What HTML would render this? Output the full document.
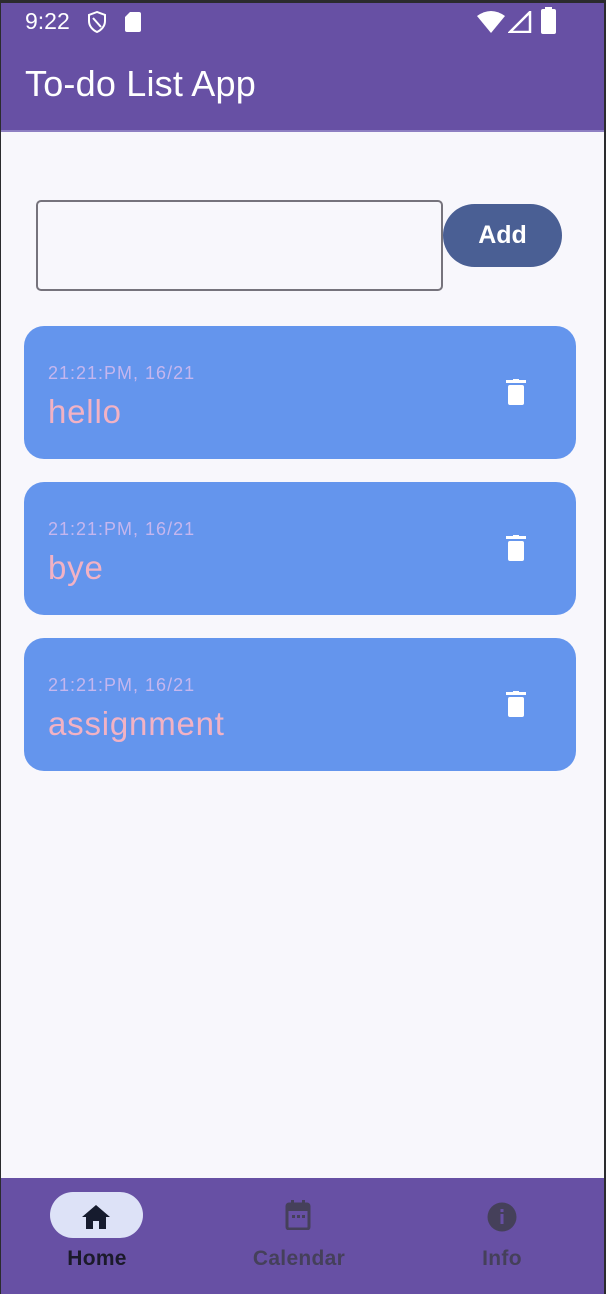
<!DOCTYPE html>
<html><head><style>
*{margin:0;padding:0;box-sizing:border-box}
body{width:606px;height:1294px;background:#2b2b2e;font-family:"Liberation Sans",sans-serif;position:relative;overflow:hidden}
.screen{position:absolute;left:1px;top:3px;width:603px;height:1291px;background:#f8f7fc}
.top{position:absolute;left:0;top:0;width:603px;height:127px;background:#6750a4}
.abs{position:absolute}
.card{position:absolute;left:23px;width:552px;height:133px;background:#6495ed;border-radius:20px}
.card .d{position:absolute;left:24px;top:37px;font-size:18px;color:#c5b6ee;letter-spacing:1px}
.card .t{position:absolute;left:24px;top:67px;font-size:33px;color:#f2b2c4;letter-spacing:.8px}
.card svg{position:absolute;left:482px;top:53px}
.nav{position:absolute;left:0;top:1175px;width:603px;height:116px;background:#6750a4}
.lbl{position:absolute;top:69px;font-size:21px;font-weight:bold;color:#45405a;transform:translateX(-50%);letter-spacing:.3px}
</style></head><body>
<div class="screen">
<div class="top">
<div class="abs" style="left:24px;top:5px;font-size:23px;color:#fff">9:22</div>
<svg class="abs" style="left:86px;top:8px" width="20" height="22" viewBox="0 0 20 22"><path d="M10 1L2 4v6c0 5 3.5 9 8 11 4.5-2 8-6 8-11V4z" fill="none" stroke="#fff" stroke-width="2"/><path d="M6 7l8 9" stroke="#fff" stroke-width="2"/></svg>
<svg class="abs" style="left:124px;top:9px" width="16" height="20" viewBox="0 0 16 20"><path d="M5 0h9a2 2 0 0 1 2 2v16a2 2 0 0 1-2 2H2a2 2 0 0 1-2-2V5z" fill="#fff"/></svg>
<svg class="abs" style="left:476px;top:8px" width="28" height="22" viewBox="0 0 28 22"><path d="M0 5Q14-5 28 5L14 22z" fill="#fff"/></svg>
<svg class="abs" style="left:507px;top:8px" width="24" height="22" viewBox="0 0 24 22"><path d="M22 1V21H2z" fill="none" stroke="#fff" stroke-width="2.5"/></svg>
<div class="abs" style="left:540px;top:6px;width:15px;height:25px;background:#fff;border-radius:2px"></div>
<div class="abs" style="left:544px;top:4px;width:7px;height:3px;background:#fff"></div>
<div class="abs" style="left:24px;top:60px;font-size:36px;color:#fff;letter-spacing:.2px">To-do List App</div>
</div>
<div class="abs" style="top:127px;left:0;width:603px;height:2px;background:#8e7fc2"></div>
<div class="abs" style="left:35px;top:197px;width:407px;height:91px;border:2px solid #76737c;border-radius:5px"></div>
<div class="abs" style="left:442px;top:201px;width:119px;height:63px;background:#4a5f94;border-radius:32px;color:#fff;font-size:25px;font-weight:bold;text-align:center;line-height:63px">Add</div>
<div class="card" style="top:323px"><div class="d">21:21:PM, 16/21</div><div class="t">hello</div><svg width="20" height="26" viewBox="0 0 20 26"><rect x="0" y="1" width="20" height="3" fill="#fff"/><rect x="7" y="0" width="6" height="2" fill="#fff"/><rect x="2" y="6" width="16" height="20" rx="2" fill="#fff"/></svg></div>
<div class="card" style="top:479px"><div class="d">21:21:PM, 16/21</div><div class="t">bye</div><svg width="20" height="26" viewBox="0 0 20 26"><rect x="0" y="1" width="20" height="3" fill="#fff"/><rect x="7" y="0" width="6" height="2" fill="#fff"/><rect x="2" y="6" width="16" height="20" rx="2" fill="#fff"/></svg></div>
<div class="card" style="top:635px"><div class="d">21:21:PM, 16/21</div><div class="t">assignment</div><svg width="20" height="26" viewBox="0 0 20 26"><rect x="0" y="1" width="20" height="3" fill="#fff"/><rect x="7" y="0" width="6" height="2" fill="#fff"/><rect x="2" y="6" width="16" height="20" rx="2" fill="#fff"/></svg></div>
<div class="nav">
<div class="abs" style="left:49px;top:14px;width:93px;height:46px;background:#dde2f7;border-radius:23px"></div>
<svg class="abs" style="left:81px;top:27px" width="28" height="24" viewBox="0 0 28 24"><path d="M14 0L0 12h4v12h7v-8h6v8h7V12h4z" fill="#161b2e"/></svg>
<svg class="abs" style="left:284px;top:22px" width="26" height="30" viewBox="0 0 26 30"><rect x="2" y="4" width="22" height="25" rx="2" fill="none" stroke="#45405a" stroke-width="3"/><rect x="2" y="4" width="22" height="7" fill="#45405a"/><rect x="6" y="0" width="3" height="6" fill="#45405a"/><rect x="17" y="0" width="3" height="6" fill="#45405a"/><rect x="7" y="15" width="3" height="3" fill="#45405a"/><rect x="12" y="15" width="3" height="3" fill="#45405a"/><rect x="17" y="15" width="3" height="3" fill="#45405a"/></svg>
<svg class="abs" style="left:486px;top:24px" width="30" height="30" viewBox="0 0 30 30"><circle cx="15" cy="15" r="14.5" fill="#45405a"/><rect x="13.5" y="12" width="3" height="10" fill="#6750a4"/><rect x="13.5" y="7" width="3" height="3" fill="#6750a4"/></svg>
<div class="lbl" style="left:96px;color:#1b1a2a">Home</div>
<div class="lbl" style="left:298px">Calendar</div>
<div class="lbl" style="left:501px">Info</div>
</div>
</div>
</body></html>
